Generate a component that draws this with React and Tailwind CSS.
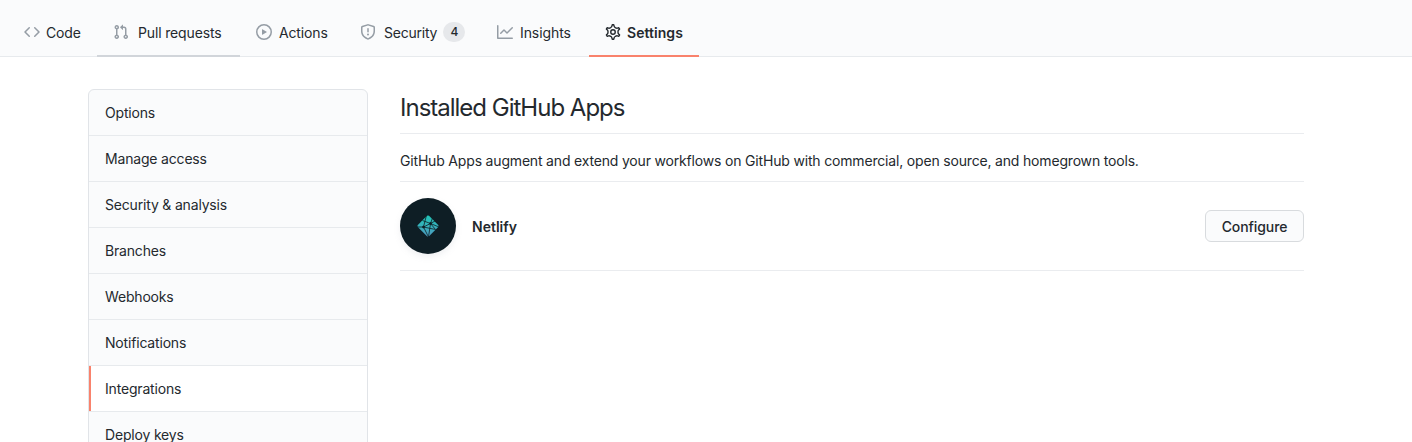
const icons = {
  code: 'M4.72 3.22a.75.75 0 011.06 1.06L2.06 8l3.72 3.72a.75.75 0 11-1.06 1.06L.47 8.53a.75.75 0 010-1.06l4.25-4.25zm6.56 0a.75.75 0 10-1.06 1.06L13.94 8l-3.72 3.72a.75.75 0 101.06 1.06l4.25-4.25a.75.75 0 000-1.06l-4.25-4.25z',
  pull: 'M7.177 3.073L9.573.677A.25.25 0 0110 .854v4.792a.25.25 0 01-.427.177L7.177 3.427a.25.25 0 010-.354zM3.75 2.5a.75.75 0 100 1.5.75.75 0 000-1.5zm-2.25.75a2.25 2.25 0 113 2.122v5.256a2.251 2.251 0 11-1.5 0V5.372A2.25 2.25 0 011.5 3.25zM11 2.5h-1V4h1a1 1 0 011 1v5.628a2.251 2.251 0 101.5 0V5A2.5 2.5 0 0011 2.5zm1 10.25a.75.75 0 111.5 0 .75.75 0 01-1.5 0zM3.75 12a.75.75 0 100 1.5.75.75 0 000-1.5z',
  play: 'M1.5 8a6.5 6.5 0 1113 0 6.5 6.5 0 01-13 0zM8 0a8 8 0 100 16A8 8 0 008 0zM6.379 5.227A.25.25 0 006 5.442v5.117a.25.25 0 00.379.214l4.264-2.559a.25.25 0 000-.428L6.379 5.227z',
  shield: 'M7.467.133a1.75 1.75 0 011.066 0l5.25 1.68A1.75 1.75 0 0115 3.48V7c0 1.566-.32 3.182-1.303 4.682-.983 1.498-2.585 2.813-5.032 3.855a1.7 1.7 0 01-1.33 0c-2.447-1.042-4.049-2.357-5.032-3.855C1.32 10.182 1 8.566 1 7V3.48a1.75 1.75 0 011.217-1.667l5.25-1.68zm.61 1.429a.25.25 0 00-.153 0l-5.25 1.68a.25.25 0 00-.174.238V7c0 1.358.275 2.666 1.057 3.86.784 1.194 2.121 2.34 4.366 3.297a.2.2 0 00.154 0c2.245-.956 3.582-2.104 4.366-3.298C13.225 9.666 13.5 8.36 13.5 7V3.48a.25.25 0 00-.174-.237l-5.25-1.68zM9 10.5a1 1 0 11-2 0 1 1 0 012 0zm-.25-5.75a.75.75 0 10-1.5 0v3a.75.75 0 001.5 0v-3z',
  graph: 'M1.5 1.75a.75.75 0 00-1.5 0v12.5c0 .414.336.75.75.75h14.5a.75.75 0 000-1.5H1.5V1.75zm14.28 2.53a.75.75 0 00-1.06-1.06L10 7.94 7.53 5.47a.75.75 0 00-1.06 0L3.22 8.72a.75.75 0 001.06 1.06L7 7.06l2.47 2.47a.75.75 0 001.06 0l5.25-5.25z',
};

const gear =
  'M7.429 1.525a6.593 6.593 0 011.142 0c.036.003.108.036.137.146l.289 1.105c.147.56.55.967.997 1.189.174.086.341.183.501.29.417.278.97.423 1.53.27l1.102-.303c.11-.03.175.016.195.046.219.31.41.641.573.989.014.031.022.11-.059.19l-.815.806c-.411.406-.562.957-.53 1.456a4.588 4.588 0 010 .582c-.032.499.119 1.05.53 1.456l.815.806c.08.08.073.159.059.19a6.494 6.494 0 01-.573.99c-.02.029-.086.074-.195.045l-1.103-.303c-.559-.153-1.112-.008-1.529.27-.16.107-.327.204-.5.29-.449.222-.851.628-.998 1.189l-.289 1.105c-.029.11-.101.143-.137.146a6.613 6.613 0 01-1.142 0c-.036-.003-.108-.037-.137-.146l-.289-1.105c-.147-.56-.55-.967-.997-1.189a4.502 4.502 0 01-.501-.29c-.417-.278-.97-.423-1.53-.27l-1.102.303c-.11.03-.175-.016-.195-.046a6.492 6.492 0 01-.573-.989c-.014-.031-.022-.11.059-.19l.815-.806c.411-.406.562-.957.53-1.456a4.587 4.587 0 010-.582c.032-.499-.119-1.05-.53-1.456l-.815-.806c-.08-.08-.073-.159-.059-.19a6.44 6.44 0 01.573-.99c.02-.029.086-.075.195-.045l1.103.303c.559.153 1.112.008 1.529-.27.16-.107.327-.204.5-.29.449-.222.851-.628.998-1.189l.289-1.105c.029-.11.101-.143.137-.146z';

const tabs = [
  { label: 'Code', icon: 'code', width: 'w-[89px]', gap: 'gap-1.5', border: 'border-transparent', text: 'tracking-[-0.15px]' },
  { label: 'Pull requests', icon: 'pull', width: 'w-[143px]', gap: 'gap-[9px]', border: 'border-[#d1d5da]', text: 'tracking-[-0.15px]' },
  { label: 'Actions', icon: 'play', width: 'w-[104px]', gap: 'gap-[7px]', border: 'border-transparent', text: 'tracking-[-0.15px]' },
  { label: 'Security', icon: 'shield', width: 'w-[137px]', gap: 'gap-2', border: 'border-transparent', text: 'tracking-[-0.22px]', count: 4 },
  { label: 'Insights', icon: 'graph', width: 'w-[108px]', gap: 'gap-[7px]', border: 'border-transparent', text: 'tracking-[-0.08px]' },
  { label: 'Settings', icon: 'gear', width: 'w-[110px]', gap: 'gap-[6px]', border: 'border-[#f9826c]', text: 'font-semibold tracking-[0.05px]' },
];

const menu = ['Options', 'Manage access', 'Security & analysis', 'Branches', 'Webhooks', 'Notifications', 'Integrations', 'Deploy keys'];

function TabIcon({ name }) {
  if (name === 'gear') {
    return (
      <svg className="size-4 shrink-0 text-[#24292e]" viewBox="0 0 16 16" fill="none" stroke="currentColor">
        <path d={gear} strokeWidth="1.25" transform="translate(8 8) scale(1.115) translate(-8 -8)" />
        <circle cx="8" cy="8" r="2.25" strokeWidth="1.4" />
      </svg>
    );
  }
  return (
    <svg className="size-4 shrink-0 text-[#959da5]" viewBox="0 0 16 16" fill="currentColor" fillRule="evenodd">
      <path d={icons[name]} />
    </svg>
  );
}

function NetlifyLogo() {
  return (
    <svg className="size-[22px]" viewBox="0 0 22 22">
      <defs>
        <linearGradient id="netlify" x1="0" y1="0" x2="0" y2="1">
          <stop offset="0" stopColor="#20c6b7" />
          <stop offset="1" stopColor="#4d9abf" />
        </linearGradient>
      </defs>
      <path d="M10 .8Q11 0 12 .8L21.2 10Q22 11 21.2 12L12 21.2Q11 22 10 21.2L.8 12Q0 11 .8 10Z" fill="url(#netlify)" />
      <g stroke="#0e1e25" strokeWidth="0.8" fill="none">
        <path d="M5.5 5.5 13.5 8.5 22 12M15.5 3 13.5 8.5 11.5 22M0 12 6.5 12 13.5 8.5 18 6M9.5 0 6.5 12 11.5 22M6.5 12 18.5 14.5M13.5 8.5 18.5 14.5" />
        <circle cx="6.5" cy="12" r="1" fill="#0e1e25" />
        <circle cx="13.5" cy="8.5" r="1" fill="#0e1e25" />
      </g>
    </svg>
  );
}

export default function App() {
  return (
    <div className="h-[442px] overflow-hidden bg-white font-['Inter',sans-serif] text-sm leading-[21px] text-[#24292e]">
      <nav className="flex h-[57px] items-end border-b border-[#e7eaed] bg-[#fafbfc] pl-2">
        {tabs.map((t) => (
          <a key={t.label} className={`-mb-px flex h-12 shrink-0 items-center border-b-2 pl-4 whitespace-nowrap ${t.width} ${t.gap} ${t.border} ${t.text}`}>
            <TabIcon name={t.icon} />
            <span>{t.label}</span>
            {t.count && (
              <span className="-ml-0.5 flex h-5 w-[22px] items-center justify-center rounded-full bg-[#e6e8eb] text-xs font-medium">{t.count}</span>
            )}
          </a>
        ))}
      </nav>
      <div className="flex gap-8 pt-8 pl-[88px]">
        <aside className="w-[280px] shrink-0 overflow-hidden rounded-t-md border border-[#e1e4e8] bg-[#fafbfc] tracking-[-0.18px]">
          {menu.map((m) => (
            <a
              key={m}
              className={`flex h-[46px] items-center border-b border-[#e7eaed] px-4 ${m === 'Integrations' ? 'bg-white shadow-[inset_2px_0_0_#f9826c]' : ''}`}
            >
              {m}
            </a>
          ))}
        </aside>
        <main className="w-[904px]">
          <h2 className="h-[45px] border-b border-[#eaecef] pt-px text-2xl leading-9 tracking-[-1px]">Installed GitHub Apps</h2>
          <p className="flex h-12 items-end border-b border-[#eaecef] pb-2.5 tracking-[-0.178px]">
            <span>GitHub Apps augment and extend your workflows on GitHub with commercial, open source, and homegrown tools.</span>
          </p>
          <div className="flex h-[89px] items-center border-b border-[#eaecef]">
            <div className="flex size-14 items-center justify-center rounded-full bg-[#0e1e25] shadow-[0_3px_6px_rgba(149,157,165,0.15)]">
              <NetlifyLogo />
            </div>
            <strong className="ml-4 flex-1 font-semibold">Netlify</strong>
            <button className="h-8 w-[99px] rounded-md border border-[#d8dbde] bg-[#fafbfc] font-medium tracking-[-0.1px]">Configure</button>
          </div>
        </main>
      </div>
    </div>
  );
}
